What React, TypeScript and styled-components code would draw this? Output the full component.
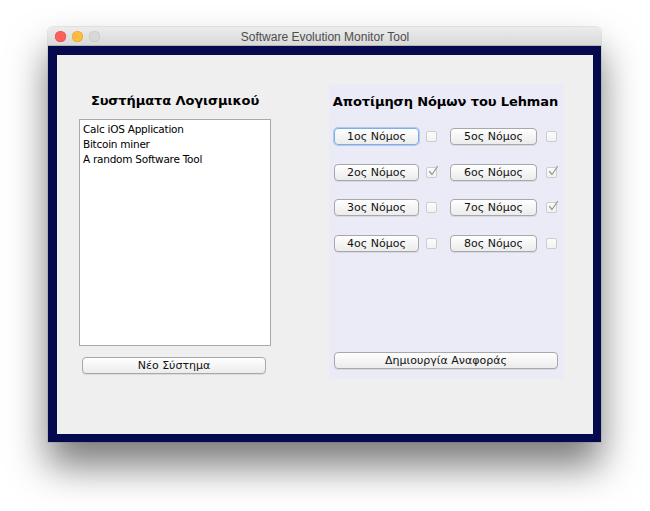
import React from "react";
import styled, { createGlobalStyle } from "styled-components";

const Global = createGlobalStyle`
  html, body { margin: 0; padding: 0; background: #ffffff; }
  body { width: 650px; height: 511px; overflow: hidden; }
`;

const Page = styled.div`
  width: 650px;
  height: 511px;
  padding: 27px 0 0 48px;
  box-sizing: border-box;
`;

const Window = styled.div`
  width: 553px;
  border-radius: 5px 5px 0 0;
  box-shadow: 0 24px 38px rgba(0, 0, 0, 0.52), 0 0 0 1px rgba(0, 0, 0, 0.08);
`;

const TitleBar = styled.div`
  height: 18px;
  border-radius: 5px 5px 0 0;
  background: linear-gradient(#ececec, #d9d9d9);
  border-bottom: 1px solid #b4b4b4;
  display: flex;
  align-items: center;
  font-family: "Liberation Sans", Arial, sans-serif;
  font-size: 12px;
  color: #4d4d4d;
`;

const Lights = styled.div`
  display: flex;
  gap: 6px;
  padding-left: 7px;
`;

const Light = styled.span<{ $c: string; $b: string }>`
  width: 11px;
  height: 11px;
  border-radius: 50%;
  background: ${(p) => p.$c};
  box-shadow: inset 0 0 0 0.5px ${(p) => p.$b};
  display: block;
`;

const Title = styled.div`
  flex: 1;
  text-align: center;
  margin-left: -51px;
  padding-top: 1px;
`;

const Frame = styled.div`
  background: #050a4e;
  padding: 9px 8px 8px 9px;
`;

const Content = styled.div`
  height: 379px;
  background: #efefef;
  display: grid;
  grid-template-columns: 22px 192px 58px 235px 1fr;
  grid-template-rows: 29px 295px 1fr;
  font-family: "DejaVu Sans", Verdana, sans-serif;
  color: #000;
`;

const LeftCol = styled.div`
  grid-column: 2;
  grid-row: 1 / span 3;
  display: flex;
  flex-direction: column;
  padding-top: 36px;
`;

const Heading = styled.div`
  font-weight: bold;
  font-size: 13px;
  text-align: center;
  line-height: 20px;
  height: 20px;
  letter-spacing: -0.1px;
  white-space: nowrap;
`;

const ListBox = styled.div`
  margin-top: 8px;
  height: 221px;
  background: #fff;
  border: 1px solid #a9a9a9;
  padding: 2px 2px;
  font-size: 10.5px;
  line-height: 15px;
  letter-spacing: -0.25px;
`;

const ListItem = styled.div`
  padding-left: 1px;
`;

const Button = styled.div<{ $focus?: boolean; $w?: number; $ml?: number }>`
  box-sizing: border-box;
  flex: none;
  height: 17px;
  width: ${(p) => (p.$w ? `${p.$w}px` : "auto")};
  margin-left: ${(p) => p.$ml ?? 0}px;
  border-radius: 4px;
  border: 1px solid ${(p) => (p.$focus ? "#7eaee6" : "#a8a8a8")};
  box-shadow: ${(p) =>
    p.$focus
      ? "0 0 0 1px rgba(126,174,230,0.55)"
      : "0 1px 0 rgba(0,0,0,0.08)"};
  background: linear-gradient(#ffffff, #f3f3f3 60%, #ececec);
  font-size: 11px;
  line-height: 15px;
  text-align: center;
  color: #111;
  white-space: nowrap;
`;

const NewButton = styled(Button)`
  margin: 11px 5px 0 3px;
`;

const Panel = styled.div`
  grid-column: 4;
  grid-row: 2;
  background: #ebebf7;
  display: flex;
  flex-direction: column;
  padding: 8px 6px 0 5px;
`;

const PanelHeading = styled(Heading)`
  margin: 0 -4px 0 -5px;
`;

const LawList = styled.div`
  margin-top: 16px;
  display: flex;
  flex-direction: column;
  gap: 18.5px;
`;

const LawRow = styled.div`
  display: flex;
  align-items: center;
  height: 17px;
`;

const Box = styled.div<{ $gap: number }>`
  flex: none;
  width: 11px;
  height: 11px;
  box-sizing: border-box;
  border: 1px solid #cdcdcd;
  border-radius: 2px;
  background: linear-gradient(#fcfcfc, #f2f2f2);
  margin-left: ${(p) => p.$gap}px;
  position: relative;
`;

const Tick = styled.svg`
  position: absolute;
  left: 0px;
  top: -3px;
  width: 12px;
  height: 12px;
  overflow: visible;
`;

const ReportButton = styled(Button)`
  margin-top: auto;
  margin-bottom: 10px;
  width: 224px;
`;

type Law = { n: number; checked: boolean };

const rows: [Law, Law][] = [
  [{ n: 1, checked: false }, { n: 5, checked: false }],
  [{ n: 2, checked: true }, { n: 6, checked: true }],
  [{ n: 3, checked: false }, { n: 7, checked: true }],
  [{ n: 4, checked: false }, { n: 8, checked: false }],
];

function Check({ checked, gap }: { checked: boolean; gap: number }) {
  return (
    <Box $gap={gap}>
      {checked && (
        <Tick viewBox="0 0 12 12">
          <path
            d="M2.5 6.5 L5 9.5 L10.5 1.5"
            fill="none"
            stroke="#9a9a9a"
            strokeWidth="1.3"
            strokeLinecap="round"
            strokeLinejoin="round"
          />
        </Tick>
      )}
    </Box>
  );
}

export default function App() {
  return (
    <>
      <Global />
      <Page>
        <Window>
          <TitleBar>
            <Lights>
              <Light $c="#fc605c" $b="#de4a46" />
              <Light $c="#fdbc40" $b="#dea236" />
              <Light $c="#d8d8d8" $b="#c2c2c2" />
            </Lights>
            <Title>Software Evolution Monitor Tool</Title>
          </TitleBar>
          <Frame>
            <Content>
              <LeftCol>
                <Heading>Συστήματα Λογισμικού</Heading>
                <ListBox>
                  <ListItem>Calc iOS Application</ListItem>
                  <ListItem>Bitcoin miner</ListItem>
                  <ListItem>A random Software Tool</ListItem>
                </ListBox>
                <NewButton>Νέο Σύστημα</NewButton>
              </LeftCol>
              <Panel>
                <PanelHeading>Αποτίμηση Νόμων του Lehman</PanelHeading>
                <LawList>
                  {rows.map(([a, b]) => (
                    <LawRow key={a.n}>
                      <Button $w={85} $focus={a.n === 1}>
                        {a.n}ος Νόμος
                      </Button>
                      <Check checked={a.checked} gap={7} />
                      <Button $w={87} $ml={13}>
                        {b.n}ος Νόμος
                      </Button>
                      <Check checked={b.checked} gap={9} />
                    </LawRow>
                  ))}
                </LawList>
                <ReportButton>Δημιουργία Αναφοράς</ReportButton>
              </Panel>
            </Content>
          </Frame>
        </Window>
      </Page>
    </>
  );
}
